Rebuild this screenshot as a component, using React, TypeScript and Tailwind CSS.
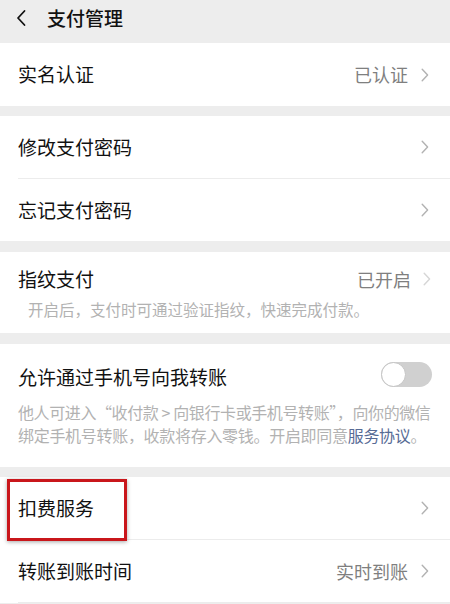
import React from "react";

const FONT = '"Noto Sans CJK SC", "Noto Sans", sans-serif';

function Chevron({ light = false }: { light?: boolean }) {
  return (
    <svg
      width="8"
      height="14"
      viewBox="0 0 8 14"
      fill="none"
      className="shrink-0"
    >
      <path
        d="M1.2 1.2 L6.6 7 L1.2 12.8"
        stroke={light ? "#d6d6d6" : "#b2b2b2"}
        strokeWidth="1.4"
        strokeLinecap="round"
        strokeLinejoin="round"
      />
    </svg>
  );
}

interface RowProps {
  title: string;
  value?: string;
  divider?: boolean;
}

function Row({ title, value, divider = false }: RowProps) {
  return (
    <div className="relative">
      <div className="flex h-[62px] items-center justify-between pl-[18px] pr-[21px]">
        <span className="text-[19px] text-[#111111]">{title}</span>
        <div className="flex items-center gap-[13px]">
          {value && (
            <span className="text-[18px] text-[#7f7f7f]">{value}</span>
          )}
          <Chevron />
        </div>
      </div>
      {divider && <div className="ml-[18px] h-px bg-[#ececec]" />}
    </div>
  );
}

function Gap({ h }: { h: string }) {
  return <div className={h} />;
}

export default function App() {
  return (
    <div
      className="h-[604px] w-[450px] overflow-hidden bg-[#ededed]"
      style={{ fontFamily: FONT }}
    >
      {/* Header */}
      <div className="flex h-[43px] items-start">
        <div className="flex h-[36px] items-center">
          <svg width="12" height="18" viewBox="0 0 12 18" className="ml-[15px]">
            <path
              d="M9.5 2 L3 9 L9.5 16"
              stroke="#111111"
              strokeWidth="1.8"
              fill="none"
              strokeLinecap="round"
              strokeLinejoin="round"
            />
          </svg>
          <span className="ml-[20px] text-[19px] font-medium text-[#111111]">
            支付管理
          </span>
        </div>
      </div>

      <div className="bg-white">
        <div className="flex h-[63px] items-center justify-between pl-[18px] pr-[21px]">
          <span className="text-[19px] text-[#111111]">实名认证</span>
          <div className="flex items-center gap-[13px]">
            <span className="text-[18px] text-[#7f7f7f]">已认证</span>
            <Chevron />
          </div>
        </div>
      </div>

      <Gap h="h-[10px]" />

      <div className="bg-white">
        <Row title="修改支付密码" divider />
        <Row title="忘记支付密码" />
      </div>

      <Gap h="h-[11px]" />

      {/* Fingerprint */}
      <div className="h-[81px] bg-white pl-[18px] pr-[19px]">
        <div className="flex h-[54px] items-center justify-between">
          <span className="text-[19px] text-[#111111]">指纹支付</span>
          <div className="flex items-center gap-[12px]">
            <span className="text-[18px] text-[#7f7f7f]">已开启</span>
            <Chevron light />
          </div>
        </div>
        <p className="-mt-[8px] pl-[10px] text-[15.5px] leading-[22px] text-[#b2b2b2]">
          开启后，支付时可通过验证指纹，快速完成付款。
        </p>
      </div>

      <Gap h="h-[11px]" />

      {/* Phone transfer */}
      <div className="h-[123px] bg-white pl-[18px] pr-[18px]">
        <div className="flex h-[66px] items-center justify-between">
          <span className="text-[19px] text-[#111111]">允许通过手机号向我转账</span>
          <div className="relative -mt-[5px] h-[25px] w-[51px] rounded-full bg-[#d0d0d0]">
            <div className="absolute left-0 top-0 h-[25px] w-[25px] rounded-full border border-[#c4c4c4] bg-white" />
          </div>
        </div>
        <p className="-mt-[9px] whitespace-nowrap text-[16px] leading-[23px] text-[#b2b2b2]">
          <span className="tracking-[-0.4px]">
            他人可进入“收付款 &gt; 向银行卡或手机号转账”，向你的微信
          </span>
          <br />
          <span className="tracking-[-0.3px]">
            绑定手机号转账，收款将存入零钱。开启即同意
            <span className="text-[#576b95]">服务协议</span>。
          </span>
        </p>
      </div>

      <Gap h="h-[10px]" />

      <div className="bg-white">
        <div className="relative">
          <Row title="扣费服务" divider />
          <div className="pointer-events-none absolute left-[7px] top-[2px] h-[62px] w-[120px] border-[3px] border-[#c9161b] shadow-[0_1px_4px_rgba(0,0,0,0.35)]" />
        </div>
        <Row title="转账到账时间" value="实时到账" divider />
      </div>
    </div>
  );
}
